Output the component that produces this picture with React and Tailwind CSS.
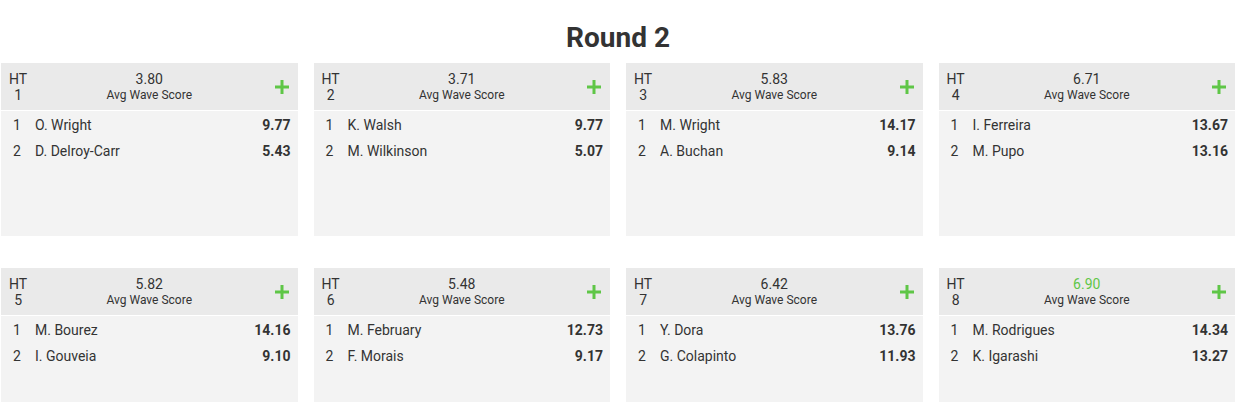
const heats = [
  { ht: 1, avg: "3.80", surfers: [["O. Wright", "9.77"], ["D. Delroy-Carr", "5.43"]] },
  { ht: 2, avg: "3.71", surfers: [["K. Walsh", "9.77"], ["M. Wilkinson", "5.07"]] },
  { ht: 3, avg: "5.83", surfers: [["M. Wright", "14.17"], ["A. Buchan", "9.14"]] },
  { ht: 4, avg: "6.71", surfers: [["I. Ferreira", "13.67"], ["M. Pupo", "13.16"]] },
  { ht: 5, avg: "5.82", surfers: [["M. Bourez", "14.16"], ["I. Gouveia", "9.10"]] },
  { ht: 6, avg: "5.48", surfers: [["M. February", "12.73"], ["F. Morais", "9.17"]] },
  { ht: 7, avg: "6.42", surfers: [["Y. Dora", "13.76"], ["G. Colapinto", "11.93"]] },
  { ht: 8, avg: "6.90", best: true, surfers: [["M. Rodrigues", "14.34"], ["K. Igarashi", "13.27"]] },
];

const Plus = () => (
  <svg width="14" height="14" viewBox="0 0 14 14" className="shrink-0">
    <rect x="5.5" y="0" width="3" height="14" fill="#5fc647" />
    <rect x="0" y="5.5" width="14" height="3" fill="#5fc647" />
  </svg>
);

const HeatCard = ({ heat }) => (
  <div className="flex flex-col bg-[#f3f3f3] h-[173px]">
    {/* header */}
    <div className="relative flex items-center bg-[#eaeaea] h-[48px] pl-[8px] pr-[9px] border-b border-white">
      <div className="flex flex-col items-center text-[14px] leading-[16px] text-[#333]">
        <span>HT</span>
        <span>{heat.ht}</span>
      </div>
      <div className="absolute inset-x-0 top-0 h-full flex flex-col items-center justify-center pointer-events-none">
        <span className={`text-[14px] leading-[16px] ${heat.best ? "text-[#5fc647]" : "text-[#333]"}`}>{heat.avg}</span>
        <span className="text-[12px] leading-[16px] text-[#333]">Avg Wave Score</span>
      </div>
      <div className="ml-auto flex items-center">
        <Plus />
      </div>
    </div>
    {/* surfers */}
    <ul className="flex flex-col pt-[1px]">
      {heat.surfers.map(([name, score], i) => (
        <li key={name} className="flex items-center h-[26px] pl-[12px] pr-[7px] text-[14px] text-[#333]">
          <span className="w-[22px]">{i + 1}</span>
          <span>{name}</span>
          <span className="ml-auto font-bold">{score}</span>
        </li>
      ))}
    </ul>
  </div>
);

export default function App() {
  return (
    <div className="bg-white min-h-screen font-['Roboto',sans-serif] text-[#333]">
      <h1 className="text-center font-bold text-[28px] leading-[38px] pt-[19px] pb-[6px] text-[#333]">Round 2</h1>
      <div className="grid grid-cols-4 gap-x-4 gap-y-8 px-[1px]">
        {heats.map((h) => (
          <HeatCard key={h.ht} heat={h} />
        ))}
      </div>
    </div>
  );
}
